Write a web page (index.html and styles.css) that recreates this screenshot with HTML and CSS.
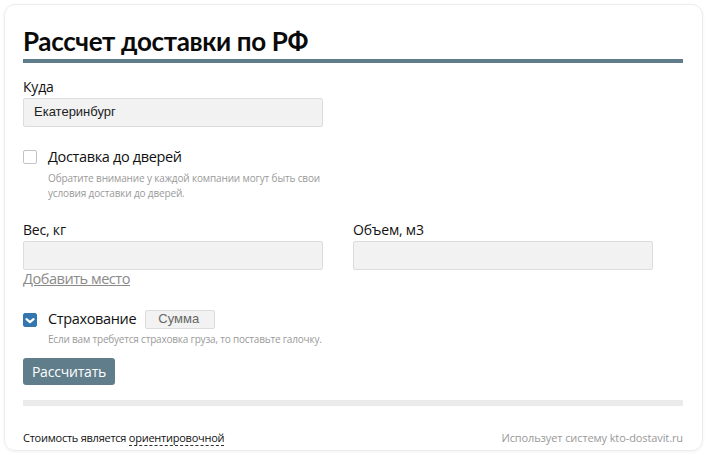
FILE: index.html
```html
<!DOCTYPE html>
<html lang="ru">
<head>
<meta charset="utf-8">
<title>Рассчет доставки по РФ</title>
<link rel="stylesheet" href="styles.css">
</head>
<body>
<div class="card">
  <h1 class="title">Рассчет доставки по РФ</h1>
  <div class="field">
    <label class="label">Куда</label>
    <div class="input wide">Екатеринбург</div>
  </div>
  <div class="check-row">
    <span class="checkbox"></span>
    <span class="check-label">Доставка до дверей</span>
  </div>
  <p class="hint hint-door">Обратите внимание у каждой компании могут быть свои<br>условия доставки до дверей.</p>
  <div class="two-cols">
    <div class="field">
      <label class="label">Вес, кг</label>
      <div class="input wide"></div>
    </div>
    <div class="field">
      <label class="label">Объем, м3</label>
      <div class="input wide"></div>
    </div>
  </div>
  <a class="add-place">Добавить место</a>
  <div class="check-row insurance">
    <span class="checkbox checked">
      <svg width="10" height="8" viewBox="0 0 10 8"><path d="M1.5 3.2 L5 6.2 L8.5 3.2" fill="none" stroke="#fff" stroke-width="2.2" stroke-linecap="round" stroke-linejoin="round"/></svg>
    </span>
    <span class="check-label">Страхование</span>
    <span class="input small">Сумма</span>
  </div>
  <p class="hint hint-ins">Если вам требуется страховка груза, то поставьте галочку.</p>
  <button class="btn">Рассчитать</button>
  <div class="result-bar"></div>
  <div class="footer">
    <span>Стоимость является <span class="dashed">ориентировочной</span></span>
    <span class="powered">Использует систему kto-dostavit.ru</span>
  </div>
</div>
</body>
</html>
```

FILE: styles.css
```css
* { box-sizing: border-box; }
html, body { margin: 0; padding: 0; background: #fff; }
body {
  font-family: "Open Sans", "Noto Sans", sans-serif;
  font-size: 14px;
  line-height: 1.3;
  color: #111;
}
.card {
  margin: 4px;
  width: 699px;
  height: 447px;
  border: 1px solid #ececec;
  border-radius: 11px;
  box-shadow: 0 1px 3px rgba(0,0,0,0.06);
  padding: 19px 19px 0 18px;
}
.title {
  margin: 0;
  font-family: Lato, "Open Sans", sans-serif;
  font-size: 26px;
  font-weight: 700;
  line-height: 34px;
  letter-spacing: -0.35px;
  color: #0a0a0a;
  border-bottom: 4px solid #607d8b;
  height: 39px;
}
.field { display: flex; flex-direction: column; }
.label {
  font-size: 14px;
  line-height: 19px;
  margin-top: 14px;
  margin-bottom: 2px;
  letter-spacing: -0.2px;
}
.input {
  display: flex;
  align-items: center;
  background: #f2f2f2;
  border: 1px solid #dcdcdc;
  border-radius: 2px;
  font-family: "Liberation Sans", Arial, sans-serif;
  font-size: 13px;
  color: #222;
}
.input.wide { width: 300px; height: 29px; padding-left: 10px; }
.check-row {
  display: flex;
  align-items: center;
  margin-top: 22px;
  height: 16px;
}
.checkbox {
  flex: none;
  width: 14px;
  height: 14px;
  border: 1px solid #c4c4c4;
  border-radius: 2px;
  background: #fff;
  margin-right: 11px;
  display: flex;
  align-items: center;
  justify-content: center;
}
.checkbox.checked {
  background: #3477b0;
  border-color: #3477b0;
}
.check-label {
  font-size: 14.5px;
  letter-spacing: -0.35px;
}
.hint {
  margin: 0;
  padding-left: 25px;
  font-size: 10px;
  line-height: 15px;
  color: #9a9a9a;
  letter-spacing: -0.15px;
}
.hint-door { margin-top: 6px; }
.two-cols {
  display: flex;
  gap: 30px;
  margin-top: 5px;
}
.add-place {
  display: block;
  width: max-content;
  font-size: 14.5px;
  color: #8a8a8a;
  text-decoration: underline;
  line-height: 18px;
  letter-spacing: -0.45px;
}
.insurance { margin-top: 22px; height: 19px; }
.input.small {
  width: 70px;
  height: 19px;
  margin-left: 9px;
  padding-left: 12px;
  font-size: 13px;
  color: #666;
}
.hint-ins { margin-top: 3px; letter-spacing: -0.2px; }
.btn {
  display: block;
  margin-top: 11px;
  width: 92px;
  height: 27px;
  background: #607d8b;
  color: #fff;
  border: none;
  border-radius: 3px;
  font-family: "Open Sans", sans-serif;
  font-size: 14px;
  letter-spacing: -0.2px;
  padding: 0;
}
.result-bar {
  margin-top: 15px;
  height: 6px;
  background: #ebebeb;
}
.footer {
  display: flex;
  justify-content: space-between;
  align-items: baseline;
  margin-top: 24px;
  font-size: 11px;
  line-height: 16px;
  letter-spacing: -0.25px;
}
.dashed { border-bottom: 1px dashed #333; }
.powered { color: #999; letter-spacing: -0.1px; }
```
